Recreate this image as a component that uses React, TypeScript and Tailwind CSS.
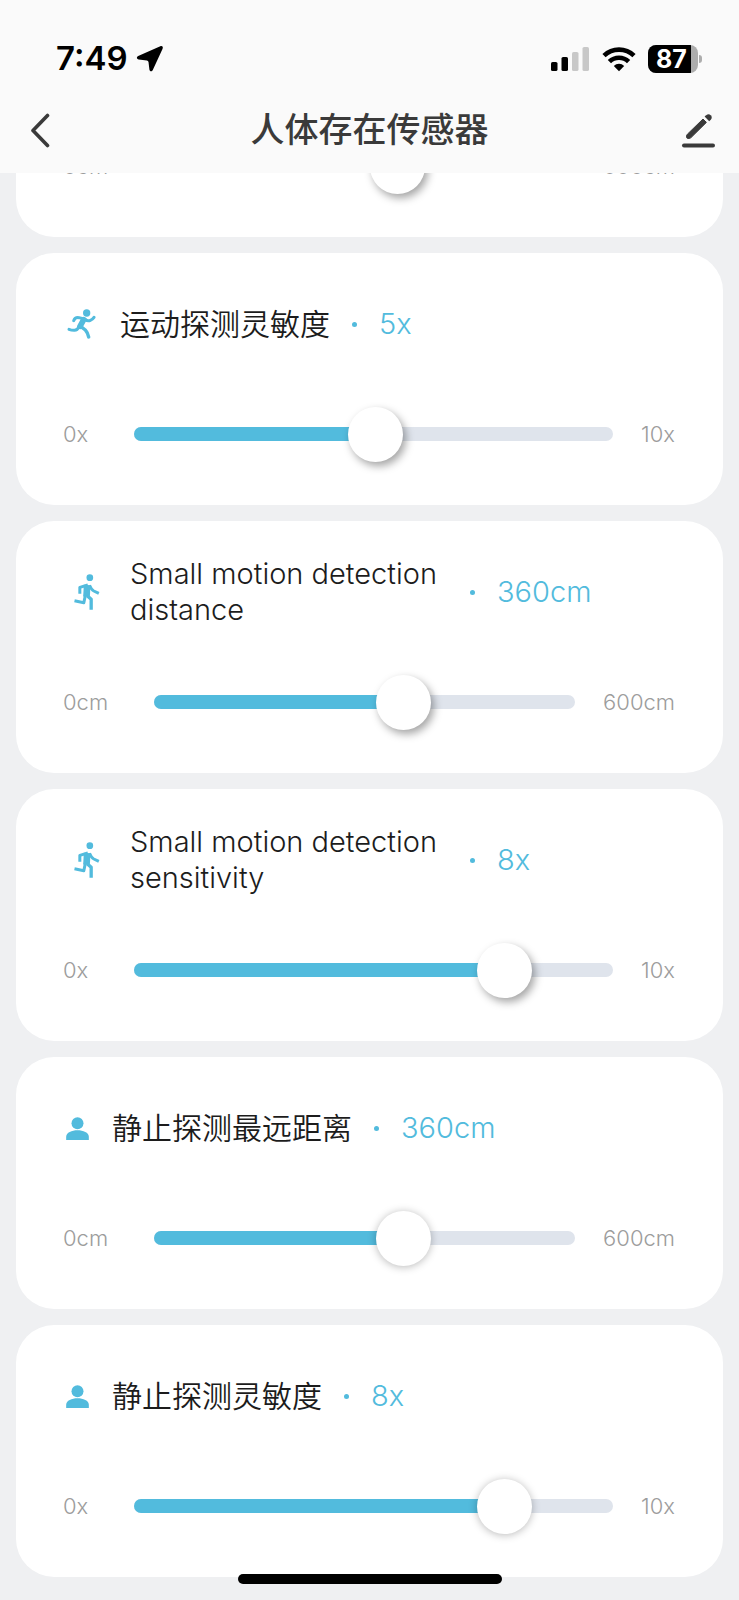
import { useState } from "react";

type IconName = "run" | "walk" | "person";

interface Setting {
  id: string;
  icon: IconName;
  lang: "zh" | "en";
  title: string;
  value: number;
  max: number;
  unit: string;
  softThumb?: boolean;
}

const settings: Setting[] = [
  { id: "motion-sensitivity", icon: "run", lang: "zh", title: "运动探测灵敏度", value: 5, max: 10, unit: "x" },
  { id: "small-distance", icon: "walk", lang: "en", title: "Small motion detection distance", value: 360, max: 600, unit: "cm" },
  { id: "small-sensitivity", icon: "walk", lang: "en", title: "Small motion detection sensitivity", value: 8, max: 10, unit: "x" },
  { id: "static-distance", icon: "person", lang: "zh", title: "静止探测最远距离", value: 360, max: 600, unit: "cm", softThumb: true },
  { id: "static-sensitivity", icon: "person", lang: "zh", title: "静止探测灵敏度", value: 8, max: 10, unit: "x", softThumb: true },
];

function RunIcon() {
  return (
    <span className="flex w-9 shrink-0 justify-center">
      <svg width="30" height="30" viewBox="34 57 90 90" fill="none" stroke="currentColor" strokeWidth="9" strokeLinecap="round" strokeLinejoin="round" aria-hidden="true">
        <circle cx="96" cy="69" r="11" fill="currentColor" stroke="none" />
        <path d="M57 92 Q61 81 73 83 L89 87" />
        <path d="M92 88 Q99 95 107 91 Q114 88 118 82" />
        <path d="M87 89 L76 109" strokeWidth="17" />
        <path d="M73 110 Q68 122 58 121 Q50 121 43 118" />
        <path d="M78 109 L92 120 Q98 126 102 141" strokeWidth="10" />
      </svg>
    </span>
  );
}

function WalkIcon() {
  return (
    <span className="flex w-[46px] shrink-0 justify-center">
      <svg width="27" height="36" viewBox="42 40 80 108" fill="none" stroke="currentColor" strokeWidth="9" strokeLinejoin="round" aria-hidden="true">
        <circle cx="92" cy="51" r="10" fill="currentColor" stroke="none" />
        <path d="M62 99 V80 L86 73" />
        <path d="M91 74 Q96 87 104 91 L119 98" />
        <path d="M84 73 L82 108" strokeWidth="20" />
        <path d="M79 102 L74 126 L46 120" />
        <path d="M84 105 L96 116 V147" strokeWidth="10" />
      </svg>
    </span>
  );
}

function PersonIcon() {
  return (
    <span className="flex w-7 shrink-0 justify-center">
      <svg width="23" height="23" viewBox="80 109 68 69" fill="currentColor" aria-hidden="true">
        <circle cx="114" cy="128" r="18" />
        <path d="M80 178 V168 C80 156 97 149 114 149 C131 149 148 156 148 168 V178 Z" />
      </svg>
    </span>
  );
}

const icons = { run: RunIcon, walk: WalkIcon, person: PersonIcon };

interface SliderProps {
  id: string;
  value: number;
  max: number;
  unit: string;
  softThumb?: boolean;
  labelledBy: string;
  onChange: (value: number) => void;
}

function Slider({ id, value, max, unit, softThumb, labelledBy, onChange }: SliderProps) {
  return (
    <div className="flex h-14 items-center text-[22px] text-[#9c9c9c]">
      <span id={`${id}-min`} className="mr-[46px]">0{unit}</span>
      <div className="grid flex-1 items-center">
        <div className="col-start-1 row-start-1 h-[14px] overflow-hidden rounded-full bg-[#dfe4ec]">
          <div className="h-full bg-[#52bbdd]" style={{ width: `${(value / max) * 100}%` }} />
        </div>
        <input
          id={id}
          type="range"
          min={0}
          max={max}
          value={value}
          aria-labelledby={labelledBy}
          onChange={(e) => onChange(Number(e.target.value))}
          className={`col-start-1 row-start-1 -mr-1 h-14 cursor-pointer appearance-none bg-transparent outline-none [&::-webkit-slider-thumb]:size-[55px] [&::-webkit-slider-thumb]:appearance-none [&::-webkit-slider-thumb]:rounded-full [&::-webkit-slider-thumb]:bg-white ${
            softThumb
              ? "[&::-webkit-slider-thumb]:shadow-[0_1px_8px_rgba(0,0,0,0.28)]"
              : "[&::-webkit-slider-thumb]:shadow-[3px_4px_9px_rgba(0,0,0,0.36)]"
          }`}
        />
      </div>
      <span id={`${id}-max`} className="ml-7">{max}{unit}</span>
    </div>
  );
}

function SettingCard({ setting }: { setting: Setting }) {
  const [value, setValue] = useState(setting.value);
  const Icon = icons[setting.icon];

  return (
    <section className="rounded-[38px] bg-white pt-8 pr-12 pb-[43px] pl-[47px]">
      <div className="mb-[43px] flex min-h-[78px] items-center text-[29px] leading-9 text-[#52bbdd]">
        <Icon />
        <label
          id={`${setting.id}-label`}
          htmlFor={setting.id}
          className={`ml-[21px] max-w-[318px] text-[#1c1c1c] ${setting.lang === "zh" ? "text-[30px]" : "text-[29px]"}`}
        >
          {setting.title}
        </label>
        <span className="mx-[22px] size-[5px] shrink-0 rounded-full bg-[#52bbdd]" />
        <output htmlFor={setting.id}>{value}{setting.unit}</output>
      </div>
      <Slider
        id={setting.id}
        value={value}
        max={setting.max}
        unit={setting.unit}
        softThumb={setting.softThumb}
        labelledBy={`${setting.id}-label`}
        onChange={setValue}
      />
    </section>
  );
}

function StatusBar() {
  return (
    <div className="flex h-[86px] items-end justify-between pr-[37px] pb-[7px] pl-14">
      <div className="flex h-10 items-center gap-2 text-[33px] font-semibold text-black">
        <span>7:49</span>
        <svg width="28" height="28" viewBox="0 0 28 28" aria-hidden="true">
          <path d="M24.3 1.3 C26.2 .6 27.4 1.9 26.6 3.7 L16.8 25 C15.9 27 13.6 26.5 13.4 24.5 L12.5 17 Q12.3 15.6 10.9 15.4 L2.7 14.5 C.6 14.2 .3 12 2.2 11.1 Z" fill="black" />
        </svg>
      </div>
      <div className="flex h-10 items-center gap-3">
        <svg width="39" height="26" viewBox="0 0 39 26" aria-hidden="true">
          <rect x="0" y="16" width="6.5" height="9" rx="1.6" />
          <rect x="10.5" y="11" width="6.5" height="14" rx="1.6" />
          <rect x="21" y="6" width="6.5" height="19" rx="1.6" fill="#c8c8c8" />
          <rect x="31.5" y="1" width="6.5" height="24" rx="1.6" fill="#c8c8c8" />
        </svg>
        <svg width="34" height="26" viewBox="0 0 34 26" fill="none" stroke="black" strokeWidth="4.6" aria-hidden="true">
          <path d="M2 9.7 A21.6 21.6 0 0 1 32 9.7" />
          <path d="M7.4 15.7 A13.6 13.6 0 0 1 26.6 15.7" />
          <path d="M17 25.2 L11.8 20 A7.4 7.4 0 0 1 22.2 20 Z" fill="black" stroke="none" />
        </svg>
        <div className="flex items-center gap-px">
          <div className="flex h-7 w-[50px] overflow-hidden rounded-lg bg-[#adadad] text-[25px] leading-7 font-bold text-white">
            <span className="w-[43px] bg-black pl-2">87</span>
          </div>
          <span className="h-2 w-[3px] rounded-r-full bg-[#adadad]" />
        </div>
      </div>
    </div>
  );
}

export default function App() {
  const [distance, setDistance] = useState(350);

  return (
    <div className="relative flex min-h-screen flex-col bg-[#eff0f2] font-['Inter','Noto_Sans_CJK_SC',sans-serif] font-[350]">
      <header className="relative z-10 bg-[#fafafa] text-[#3a3a3a]">
        <StatusBar />
        <div className="grid h-[87px] grid-cols-[1fr_auto_1fr] items-center px-6">
          <button type="button" aria-label="返回" className="justify-self-start p-1">
            <svg width="26" height="36" viewBox="0 0 26 36" fill="none" stroke="currentColor" strokeWidth="3.6" strokeLinecap="round" strokeLinejoin="round">
              <path d="M19.5 3.5 L5 18.5 L19.5 33.5" />
            </svg>
          </button>
          <h1 className="text-[34px] font-medium">人体存在传感器</h1>
          <button type="button" aria-label="编辑" className="justify-self-end">
            <svg width="34" height="36" viewBox="0 0 34 36" fill="none" stroke="currentColor">
              <path d="M3 33.5 H32" strokeWidth="4" strokeLinecap="round" />
              <path d="M22 7 L25.4 10.4 L10 25.6 Q9.2 26.4 8.1 26.4 H6.9 Q5.6 26.4 5.6 25.1 V24 Q5.6 23 6.4 22.2 Z" fill="currentColor" strokeWidth="1" strokeLinejoin="round" />
              <path d="M23.6 4.6 L25.2 3.2 Q27.6 1.2 29.7 3.2 Q31.8 5.3 29.8 7.7 L28.2 9.2 Z" fill="currentColor" stroke="none" />
            </svg>
          </button>
        </div>
      </header>

      <main className="flex flex-col gap-4 overflow-hidden px-4 pb-[23px]">
        {/* card scrolled most of the way under the header */}
        <section className="-mt-[35px] rounded-b-[38px] bg-white pr-12 pb-[43px] pl-[47px]">
          <Slider
            id="motion-distance"
            value={distance}
            max={600}
            unit="cm"
            labelledBy="motion-distance-min motion-distance-max"
            onChange={setDistance}
          />
        </section>
        {settings.map((setting) => (
          <SettingCard key={setting.id} setting={setting} />
        ))}
      </main>

      <div className="absolute bottom-4 left-1/2 h-[10px] w-[264px] -translate-x-1/2 rounded-full bg-black" />
    </div>
  );
}
